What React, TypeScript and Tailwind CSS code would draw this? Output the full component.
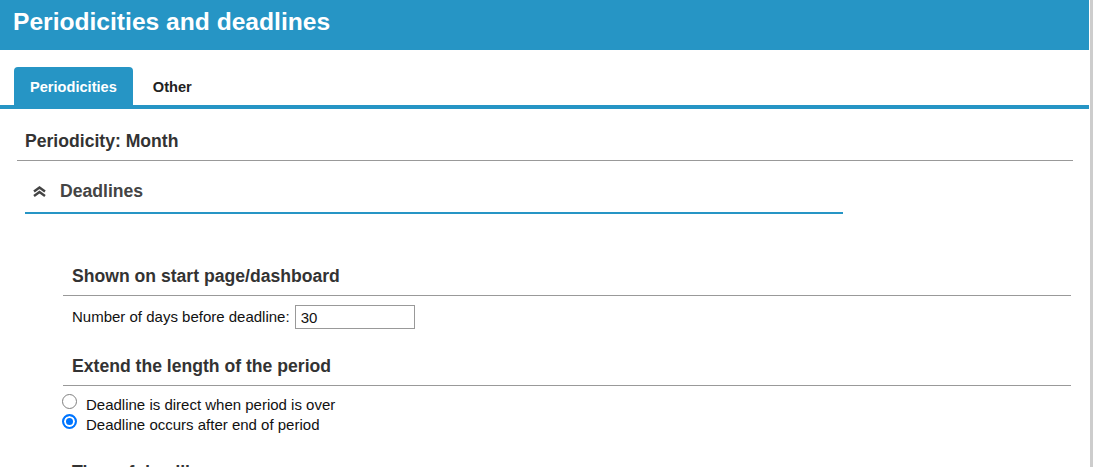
import { useState } from 'react';

const font = "font-['Liberation_Sans',Arial,sans-serif]";

function DoubleChevronUp() {
  return (
    <svg width="15" height="11" viewBox="0 0 15 11" aria-hidden="true">
      <polyline points="2,5.5 7.5,1.5 13,5.5" fill="none" stroke="#444" strokeWidth="2.4" />
      <polyline points="2,10 7.5,6 13,10" fill="none" stroke="#444" strokeWidth="2.4" />
    </svg>
  );
}

function SubHeading({ title, mt }: { title: string; mt: string }) {
  return (
    <div className={`${mt} pl-[9px] pb-[8px] border-b border-[#999]`}>
      <h3 className="text-[17.6px] leading-[22px] font-bold text-[#333]">{title}</h3>
    </div>
  );
}

function Radio({ label, checked, onSelect }: { label: string; checked: boolean; onSelect: () => void }) {
  return (
    <label className="h-[20px] flex items-start gap-[9px] -ml-[1px]">
      <input
        type="radio"
        name="deadline"
        checked={checked}
        onChange={onSelect}
        className="appearance-none shrink-0 w-[15px] h-[15px] m-0 -mt-[1px] rounded-full bg-white border-[1.5px] border-[#808080] checked:border-2 checked:border-[#0075ff] checked:bg-[#0075ff] checked:shadow-[inset_0_0_0_2px_#fff]"
      />
      <span className="leading-[20px]">{label}</span>
    </label>
  );
}

export default function App() {
  const [deadline, setDeadline] = useState<'direct' | 'after'>('after');

  return (
    <div className={`${font} flex h-[467px] w-[1093px] overflow-hidden bg-white`}>
      <div className="w-[1089px] shrink-0">
        {/* Title bar */}
        <header className="h-[50px] bg-[#2695c5] pl-[13px] pb-[6px] flex items-center">
          <h1 className="text-[24.6px] leading-none font-bold text-white">Periodicities and deadlines</h1>
        </header>

        {/* Tabs */}
        <div className="pt-[17px] pl-[14px] flex gap-[4px]">
          <button className="h-[38px] px-[16px] pt-[4px] rounded-t-[4px] bg-[#2695c5] text-white text-[14.6px] font-bold">
            Periodicities
          </button>
          <button className="h-[38px] px-[16px] pt-[4px] text-[#222] text-[14.6px] font-bold">Other</button>
        </div>
        <div className="h-[4px] bg-[#2695c5]" />

        {/* Periodicity */}
        <div className="ml-[17px] w-[1056px] h-[52px] pt-[13px] pl-[8px] flex items-center border-b border-[#999]">
          <h2 className="text-[17.6px] leading-[22px] font-bold text-[#333]">Periodicity: Month</h2>
        </div>

        {/* Deadlines accordion */}
        <div className="ml-[25px] w-[818px] h-[53px] pt-[9px] pl-[7px] flex items-center gap-[13px] border-b-2 border-[#2695c5]">
          <DoubleChevronUp />
          <span className="text-[17.6px] leading-[22px] font-bold text-[#444]">Deadlines</span>
        </div>

        <div className="ml-[63px] w-[1008px]">
          <SubHeading title="Shown on start page/dashboard" mt="mt-[51px]" />
          <div className="mt-[9px] pl-[9px] h-[24px] flex items-center gap-[5px] text-[15px] text-[#111]">
            <label htmlFor="days">Number of days before deadline:</label>
            <input
              id="days"
              defaultValue="30"
              className="w-[120px] h-[24px] border border-[#999] px-[5px] text-[15px] text-[#111] outline-none"
            />
          </div>

          <SubHeading title="Extend the length of the period" mt="mt-[26px]" />
          <div className="mt-[9px] flex flex-col text-[15px] text-[#111]">
            <Radio
              label="Deadline is direct when period is over"
              checked={deadline === 'direct'}
              onSelect={() => setDeadline('direct')}
            />
            <Radio
              label="Deadline occurs after end of period"
              checked={deadline === 'after'}
              onSelect={() => setDeadline('after')}
            />
          </div>

          <SubHeading title="Time of deadline" mt="mt-[26px]" />
        </div>
      </div>
      <div className="w-[1px] shrink-0 bg-white" />
      <div className="w-[3px] shrink-0 bg-[#cdcdcd]" />
    </div>
  );
}
